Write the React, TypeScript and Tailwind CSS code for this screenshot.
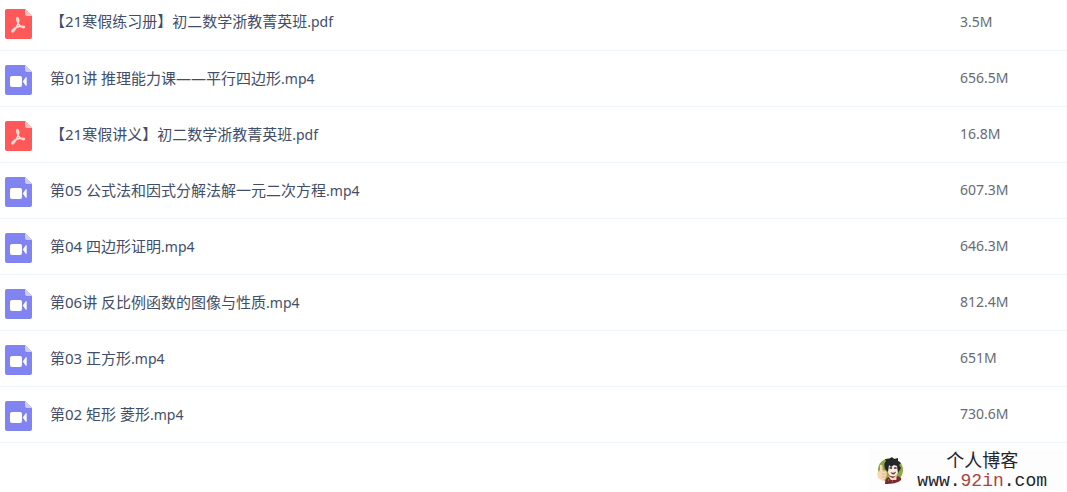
type FileKind = 'pdf' | 'mp4';

interface FileItem {
  name: string;
  kind: FileKind;
  size: string;
}

const files: FileItem[] = [
  { name: '【21寒假练习册】初二数学浙教菁英班', kind: 'pdf', size: '3.5M' },
  { name: '第01讲 推理能力课——平行四边形', kind: 'mp4', size: '656.5M' },
  { name: '【21寒假讲义】初二数学浙教菁英班', kind: 'pdf', size: '16.8M' },
  { name: '第05 公式法和因式分解法解一元二次方程', kind: 'mp4', size: '607.3M' },
  { name: '第04 四边形证明', kind: 'mp4', size: '646.3M' },
  { name: '第06讲 反比例函数的图像与性质', kind: 'mp4', size: '812.4M' },
  { name: '第03 正方形', kind: 'mp4', size: '651M' },
  { name: '第02 矩形 菱形', kind: 'mp4', size: '730.6M' },
];

function PdfIcon() {
  return (
    <svg viewBox="0 0 27 30" className="mt-1 block h-[30px] w-[27px] shrink-0" role="img" aria-label="PDF">
      <path d="M2 0H20L27 7V28a2 2 0 0 1-2 2H2a2 2 0 0 1-2-2V2a2 2 0 0 1 2-2Z" fill="#ff5858" />
      <path d="M20 0L27 7H22a2 2 0 0 1-2-2Z" fill="#ffc2bd" />
      <path
        d="M12.6 8.5C14.6 10 13.6 13.5 12.3 16.2C10.8 19.5 8.9 23 7.4 22.9C5.8 22.4 8.5 19.4 12 18.3C15 17.3 18.7 16.6 19.4 17.9C19.5 19.8 15.4 18.2 13.4 15C12 12.7 11.2 8.6 12.6 8.5Z"
        fill="none"
        stroke="#ffe0d8"
        strokeWidth="1.5"
        strokeLinecap="round"
        strokeLinejoin="round"
      />
    </svg>
  );
}

function VideoIcon() {
  return (
    <svg viewBox="0 0 27 30" className="mt-1 block h-[30px] w-[27px] shrink-0" role="img" aria-label="Video">
      <path d="M2 0H20L27 7V28a2 2 0 0 1-2 2H2a2 2 0 0 1-2-2V2a2 2 0 0 1 2-2Z" fill="#8183f1" />
      <path d="M20 0L27 7H22a2 2 0 0 1-2-2Z" fill="#cdcdfa" />
      <rect x="5" y="11" width="12" height="11" rx="2" fill="#fff" />
      <path d="M17.8 16.5L20.6 12.4C21 11.8 21.7 12 21.7 12.7V20.3C21.7 21 21 21.2 20.6 20.6Z" fill="#fff" />
    </svg>
  );
}

function Avatar() {
  return (
    <svg viewBox="0 0 28 28" className="h-7 w-7 shrink-0" role="img" aria-label="个人博客">
      <ellipse cx="14.5" cy="14" rx="12.5" ry="12" fill="#8fa63f" />
      <path d="M9 28C9 22 12 20 18 20S26 22 25 24C22 27 16 28 9 28Z" fill="#762c31" />
      <path d="M12 20L17 22L21 19L20 24L15 24Z" fill="#f0d9c5" />
      <ellipse cx="17" cy="13.5" rx="5.5" ry="7" fill="#fbe9e3" />
      <path d="M9 13C8 9 8 7 10 5L9 3L13 3L16 1L18 3L22 2L22 5L25 7L23 9L25 12L22 17L21 10L18 9L15 11L13 9L12 16Z" fill="#25252d" />
      <path d="M13.5 12h2.6M18.2 12h2.4" stroke="#2d292e" strokeWidth="1.5" />
      <path d="M14.5 16C16 17 18 17 20 15.5C19.5 19 15.5 19.5 14.5 16Z" fill="#703c43" />
      <path d="M4 9C6 8 7 10 6.5 14L10 15L11 18L10 22L7 25L2 22L1 17L4 14Z" fill="#f7d7b5" />
      <path d="M6.5 15H10M6 18H10.5M6 21H10" stroke="#d2a181" strokeWidth="0.7" />
      <path d="M12 24h1M16 25h1M20 23h1" stroke="#df8b8f" strokeWidth="1" />
    </svg>
  );
}

function FileRow({ file }: { file: FileItem }) {
  return (
    <tr className="h-14 border-b border-[#f1f4fa]">
      <td className="p-0 pl-[5px]">
        <div className="flex items-center gap-[18px]">
          {file.kind === 'pdf' ? <PdfIcon /> : <VideoIcon />}
          <span className="text-[15px] leading-5 text-[#424e67]">
            {file.name}
            <span className="text-sm">.{file.kind}</span>
          </span>
        </div>
      </td>
      <td className="w-[107px] p-0 text-sm text-[#666b74]">{file.size}</td>
    </tr>
  );
}

export default function App() {
  return (
    <main className="-mt-[6px] bg-white font-['Noto_Sans','Noto_Sans_CJK_SC',sans-serif]">
      <table className="w-full text-left" aria-label="文件列表">
        <tbody>
          {files.map((file) => (
            <FileRow key={file.name} file={file} />
          ))}
        </tbody>
      </table>

      <footer className="flex justify-end pt-[6px] pr-[3px]">
        <div className="flex items-center gap-[13px] bg-[#fdfdfd] pr-[17px] pl-[7px]">
          <Avatar />
          <div className="flex flex-col items-center gap-0.5 text-[#24242c]">
            <span className="font-['Noto_Sans_CJK_SC',sans-serif] text-lg leading-5">个人博客</span>
            <a href="#" className="font-['Liberation_Mono',monospace] text-lg leading-5">
              www.<span className="text-[#ae3f43]">92in</span>.com
            </a>
          </div>
        </div>
      </footer>
    </main>
  );
}
